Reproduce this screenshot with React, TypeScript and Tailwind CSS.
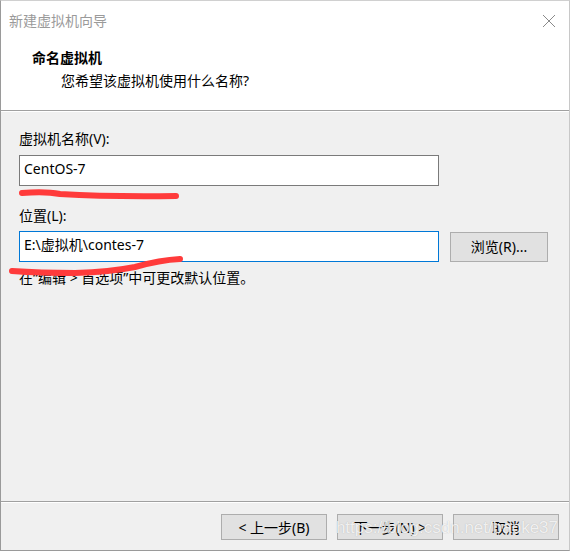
import React from "react";

const FONT = { fontFamily: '"Noto Sans", "Noto Sans CJK SC", sans-serif' };

function WinButton({ children, className = "" }: { children: React.ReactNode; className?: string }) {
  return (
    <div
      className={`flex h-[26px] w-[106px] shrink-0 items-center justify-center border border-[#adadad] bg-[#e1e1e1] text-[14px] text-black ${className}`}
    >
      {children}
    </div>
  );
}

export default function App() {
  return (
    <div
      className="relative flex h-[551px] w-[570px] flex-col overflow-hidden border border-t-[#d0d0d0] border-l-[#9a9a9a] border-r-[#c8c8c8] border-b-[#9a9a9a] bg-[#f0f0f0]"
      style={FONT}
    >
      {/* title bar + header */}
      <div className="flex flex-col border-b border-[#a0a0a0] bg-white">
        <div className="flex h-[39px] items-center justify-between pl-[8px] pr-[13px]">
          <span className="text-[14px] leading-[20px] text-[#9a9a9a]">新建虚拟机向导</span>
          <svg width="14" height="14" viewBox="0 0 14 14">
            <path d="M1 1 L13 13 M13 1 L1 13" stroke="#8a8a8a" strokeWidth="1" fill="none" />
          </svg>
        </div>
        <div className="flex h-[70px] flex-col pl-[31px] pt-[8px]">
          <div className="text-[14px] font-bold leading-[20px] text-black">命名虚拟机</div>
          <div className="mt-[3px] pl-[29px] text-[14px] leading-[20px] text-black">您希望该虚拟机使用什么名称?</div>
        </div>
      </div>
      <div className="h-px bg-white" />

      {/* form */}
      <div className="relative flex flex-1 flex-col pl-[18px] pr-[21px] pt-[17px]">
        <div className="text-[14px] leading-[20px] text-black">虚拟机名称(V):</div>
        <div className="mt-[6px] flex h-[31px] w-[420px] items-start border border-[#7a7a7a] bg-white pl-[4px] pt-[3px] text-[14px] leading-[20px] text-black">
          CentOS-7
        </div>
        <div className="mt-[20px] text-[14px] leading-[20px] text-black">位置(L):</div>
        <div className="mt-[5px] flex items-center gap-[11px]">
          <div className="flex h-[31px] w-[420px] shrink-0 items-start border border-[#0078d7] bg-white pl-[4px] pt-[3px] text-[14px] leading-[20px] text-black">
            E:\虚拟机\contes-7
          </div>
          <WinButton className="!w-[98px] !h-[30px]">浏览(R)...</WinButton>
        </div>
        <div className="mt-[6px] text-[14px] leading-[20px] text-black">在“编辑 &gt; 首选项”中可更改默认位置。</div>

        {/* red marker strokes drawn over the form */}
        <svg className="pointer-events-none absolute left-0 top-0" width="570" height="200" viewBox="0 0 570 200">
          <g transform="translate(-1,-111)">
            <path
              d="M22 192 Q 45 190 60 193 Q 110 196 176 195"
              stroke="#ff3b3b"
              strokeWidth="6"
              strokeLinecap="round"
              fill="none"
            />
            <path
              d="M12 270 Q 40 272 75 272 Q 110 271 135 266 Q 160 259 180 258"
              stroke="#ff3b3b"
              strokeWidth="6"
              strokeLinecap="round"
              fill="none"
            />
          </g>
        </svg>
      </div>

      {/* footer */}
      <div className="border-t border-[#a0a0a0]">
        <div className="h-px bg-white" />
        <div className="flex h-[47px] items-start justify-end gap-[10px] pr-[10px] pt-[11px]">
          <WinButton>&lt; 上一步(B)</WinButton>
          <WinButton>下一步(N) &gt;</WinButton>
          <WinButton>取消</WinButton>
        </div>
      </div>

      <div
        className="pointer-events-none absolute right-[11px] top-[514px] text-[17px] leading-[26px] text-white/80"
        style={{ fontFamily: '"Liberation Sans", Arial, sans-serif', textShadow: "0 0 1px rgba(120,120,120,0.5)" }}
      >
        https://blog.csdn.net/baoke37
      </div>
    </div>
  );
}
